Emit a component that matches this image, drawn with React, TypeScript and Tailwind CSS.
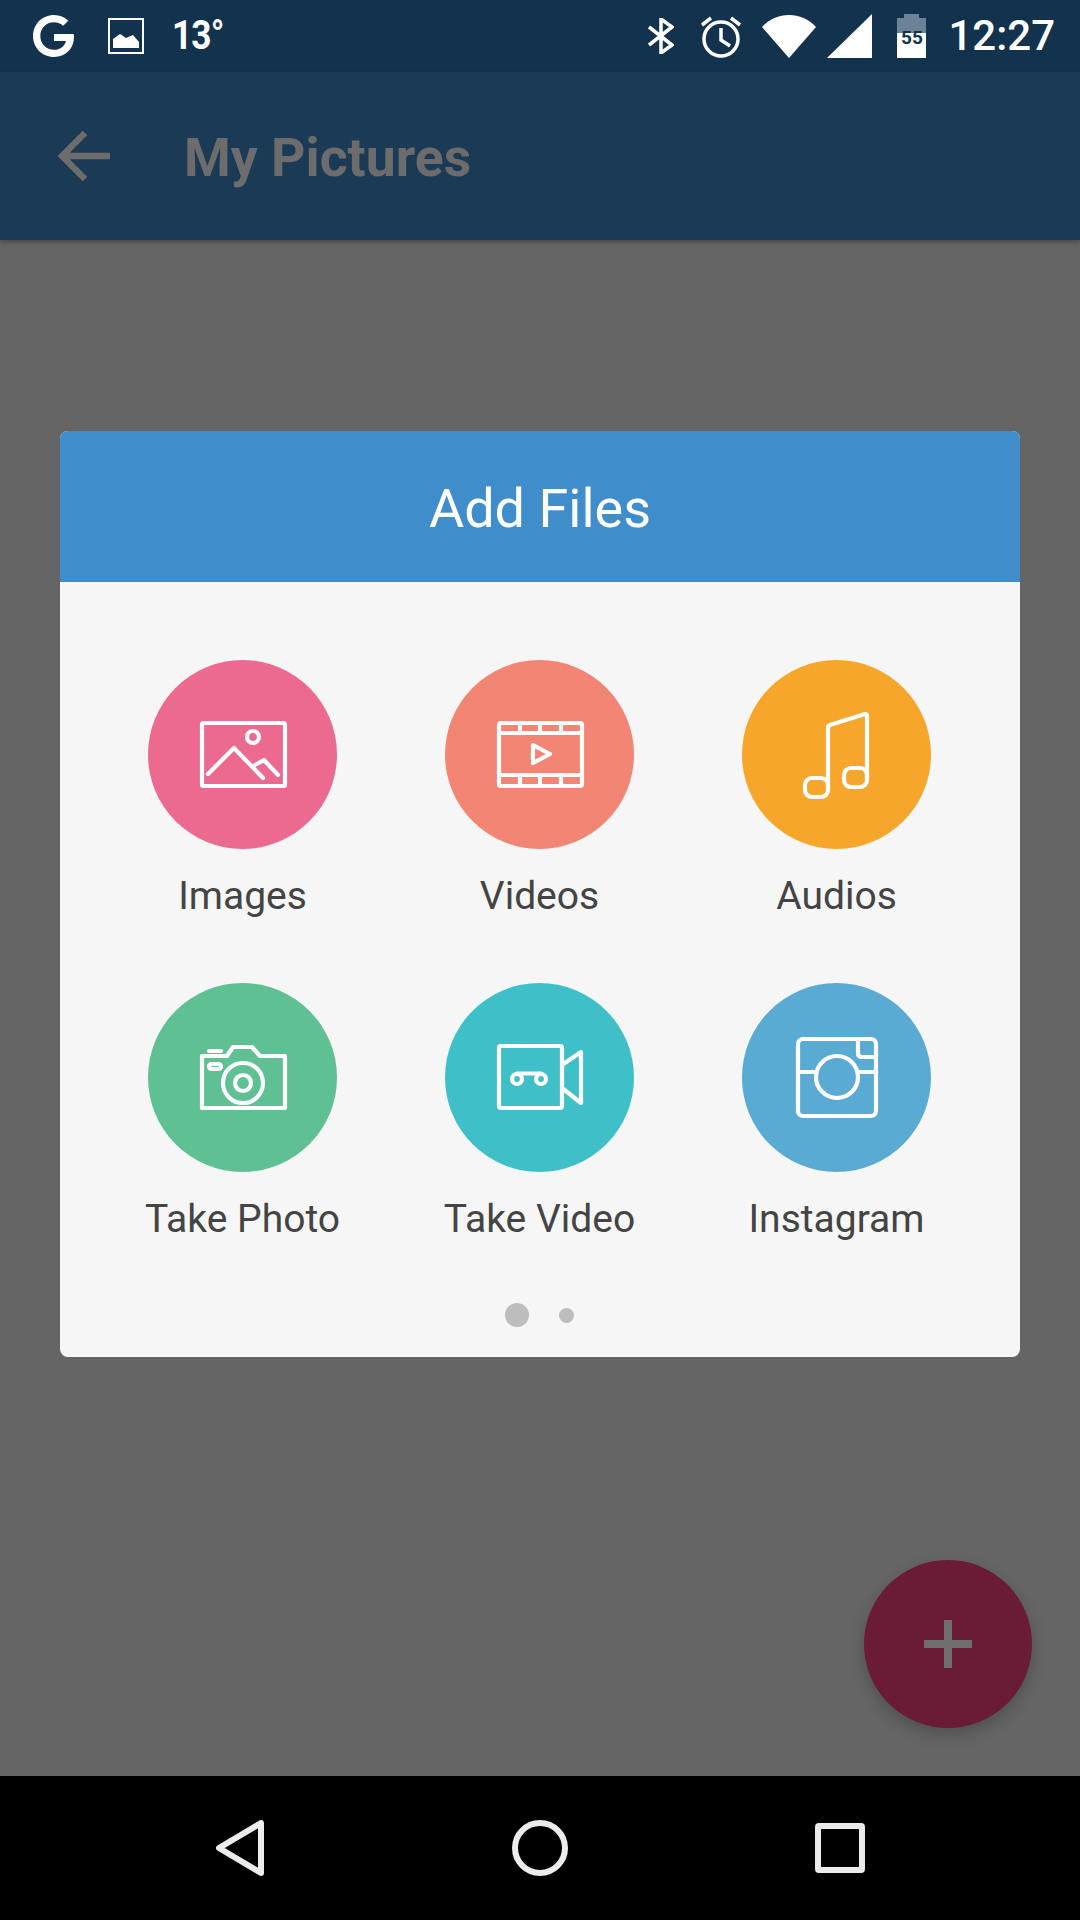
const Tile = ({ color, label, children }: { color: string; label: string; children: React.ReactNode }) => (
  <div className="flex flex-col items-center">
    <div className={`w-[189px] h-[189px] rounded-full ${color}`}>
      <svg width="189" height="189" viewBox="0 0 189 189" fill="none" stroke="#fff" strokeWidth="4.200" strokeLinecap="round" strokeLinejoin="round">
        {children}
      </svg>
    </div>
    <div className="mt-[23px] h-[48px] leading-[48px] text-[39px] text-[#444444] whitespace-nowrap">{label}</div>
  </div>
);

const tiles = [
  {
    color: "bg-[#ec6a90]",
    label: "Images",
    icon: (
      <>
        <rect x="54" y="63" width="83" height="63" rx="1.5" />
        <circle cx="105" cy="77" r="6" />
        <path d="M60 114 L86 88 L115 118" />
        <path d="M107 105 L116 100 L130 115" />
      </>
    ),
  },
  {
    color: "bg-[#f28574]",
    label: "Videos",
    icon: (
      <>
        <rect x="54" y="63" width="83" height="63" rx="2" />
        <path d="M54 73 H137 M54 115 H137 M75 63 V73 M95 63 V73 M116 63 V73 M75 115 V126 M95 115 V126 M116 115 V126" />
        <path d="M88 85 L105 94 L88 103 Z" />
      </>
    ),
  },
  {
    color: "bg-[#f6a72b]",
    label: "Audios",
    icon: (
      <>
        <path d="M86 128 V68 Q86 66 88 65 L123 54 Q125 54 125 56 V118" />
        <rect x="63" y="118" width="23" height="19" rx="7" />
        <rect x="102" y="108" width="23" height="19" rx="7" />
      </>
    ),
  },
  {
    color: "bg-[#5fc093]",
    label: "Take Photo",
    icon: (
      <>
        <path d="M79 73 L85 64 H104 L112 73 H137 V125 H54 V73 Z" />
        <circle cx="95" cy="100" r="20" />
        <circle cx="95" cy="100" r="8" />
        <rect x="61" y="81" width="12" height="5" rx="2.500" />
        <path d="M61 68 H73" />
      </>
    ),
  },
  {
    color: "bg-[#3fc0c8]",
    label: "Take Video",
    icon: (
      <>
        <rect x="54" y="63" width="63" height="62" rx="2" />
        <path d="M117 82 L136 69 V120 L117 105" />
        <circle cx="72" cy="96" r="5" />
        <circle cx="96" cy="96" r="5" />
        <path d="M72 90.500 H96" />
      </>
    ),
  },
  {
    color: "bg-[#5aabd3]",
    label: "Instagram",
    icon: (
      <>
        <rect x="56" y="56" width="78" height="77" rx="5" />
        <circle cx="95" cy="94" r="21" />
        <path d="M56 89 H74 M116 89 H134" />
        <path d="M116 56 V70 Q116 74 120 74 H134" />
      </>
    ),
  },
];

export default function App() {
  return (
    <div className="w-[1080px] h-[1920px] flex flex-col overflow-hidden bg-[#656565] font-['Roboto',sans-serif]">
      {/* Status bar */}
      <div className="h-[72px] shrink-0 bg-[#12324d] flex items-center text-white">
        <svg className="ml-[33px]" width="41" height="42" viewBox="0 0 41 42">
          <path
            d="M40.500 19 H21 V26 H33 C31.500 31.500 27 34.800 21 34.800 C13.200 34.800 7.300 28.800 7.300 21 C7.300 13.200 13.200 7.200 21 7.200 C24.700 7.200 27.800 8.500 30.200 10.800 L35.300 5.700 C31.600 2.200 26.700 0 21 0 C9.300 0 0 9.300 0 21 C0 32.700 9.300 42 21 42 C32.500 42 41 33.800 41 21.500 C41 20.600 40.800 19.800 40.500 19 Z"
            fill="#fff"
          />
        </svg>
        <svg className="ml-[34px]" width="36" height="36" viewBox="0 0 36 36">
          <rect x="1" y="1" width="34" height="34" fill="none" stroke="#fff" strokeWidth="2" />
          <path d="M5 30 V21 L12 16 L18 20 L25 17 L31 24 V30 Z" fill="#fff" />
        </svg>
        <div className="ml-[28px] text-[40px] font-bold leading-none tracking-[-1px] scale-x-[0.88] origin-left">13°</div>
        <div className="flex-1" />
        <svg width="26" height="36" viewBox="0 0 26 36" fill="none" stroke="#fff" strokeWidth="3.500">
          <path d="M1 9 L24 27 L13 35 V1 L24 9 L1 27" />
        </svg>
        <svg className="ml-[26px]" width="42" height="43" viewBox="0 0 42 43" fill="none" stroke="#fff" strokeWidth="3.500">
          <circle cx="21" cy="24" r="17" />
          <path d="M21 13 V25 L30 31 M2 10 L11 3 M40 10 L31 3" />
        </svg>
        <svg className="ml-[20px]" width="54" height="43" viewBox="0 0 54 43">
          <path d="M0 12 C7 4 17 0 27 0 C37 0 47 4 54 12 L27 43 Z" fill="#fff" />
        </svg>
        <svg className="ml-[11px]" width="45" height="44" viewBox="0 0 45 44">
          <path d="M45 0 V44 H0 Z" fill="#fff" />
        </svg>
        <div className="ml-[25px] relative w-[29px] h-[44px] flex flex-col items-center">
          <div className="w-[15px] h-[4px] bg-[#6b8297]" />
          <div className="w-[29px] h-[15px] bg-[#6b8297]" />
          <div className="w-[29px] flex-1 bg-white" />
          <div className="absolute left-0 right-0 top-[14px] text-center text-[19px] leading-[20px] font-bold text-[#12324d]">55</div>
        </div>
        <div className="ml-[22px] mr-[25px] text-[42px] leading-none font-medium">12:27</div>
      </div>

      {/* App bar */}
      <div className="relative z-10 h-[168px] shrink-0 bg-[#1b3a55] flex items-center shadow-[0_2px_5px_rgba(0,0,0,0.3)]">
        <svg className="ml-[58px]" width="52" height="50" viewBox="0 0 52 50" fill="none" stroke="#6c6c6c" strokeWidth="6.500">
          <path d="M52 25 H4 M27 2 L4 25 L27 48" />
        </svg>
        <div className="ml-[74px] pt-[4px] text-[53.500px] font-bold leading-none text-[#6c6c6c]">My Pictures</div>
      </div>

      {/* Content */}
      <div className="relative flex-1 bg-[#656565]">
        <div className="absolute inset-0 flex justify-center items-start pt-[191px]">
          <div className="w-[960px] h-[926px] rounded-[8px] overflow-hidden bg-[#f6f6f6] flex flex-col">
            <div className="h-[151px] shrink-0 bg-[#3f8dcb] flex items-center justify-center pt-[3px] text-white text-[54px]">Add Files</div>
            <div className="pt-[78px] px-[34px] grid grid-cols-[repeat(3,297px)] gap-y-[63px]">
              {tiles.map((t) => (
                <Tile key={t.label} color={t.color} label={t.label}>
                  {t.icon}
                </Tile>
              ))}
            </div>
            <div className="mt-[60px] pr-[2px] flex items-center justify-center gap-[30px]">
              <div className="w-[24px] h-[24px] rounded-full bg-[#bdbdbd]" />
              <div className="w-[15px] h-[15px] rounded-full bg-[#bdbdbd]" />
            </div>
          </div>
        </div>
        <div className="absolute left-[864px] top-[1320px] w-[168px] h-[168px] rounded-full bg-[#6a1b35] flex items-center justify-center shadow-[0_6px_16px_rgba(0,0,0,0.22)]">
          <svg width="48" height="48" viewBox="0 0 48 48" fill="none" stroke="#6e6e6e" strokeWidth="8">
            <path d="M0 24 H48 M24 0 V48" />
          </svg>
        </div>
      </div>

      {/* Nav bar */}
      <div className="h-[144px] shrink-0 bg-black flex items-start pt-[44px]">
        <svg className="ml-[216px]" width="48" height="56" viewBox="0 0 48 56" fill="none" stroke="#ececec" strokeWidth="6" strokeLinejoin="round">
          <path d="M45 3 V53 L3 28 Z" />
        </svg>
        <svg className="ml-[248px]" width="56" height="56" viewBox="0 0 56 56" fill="none" stroke="#ececec" strokeWidth="6">
          <circle cx="28" cy="28" r="25" />
        </svg>
        <svg className="ml-[247px] mt-[3px]" width="50" height="50" viewBox="0 0 50 50" fill="none" stroke="#ececec" strokeWidth="6" strokeLinejoin="round">
          <rect x="3" y="3" width="44" height="44" rx="1" />
        </svg>
      </div>
    </div>
  );
}
